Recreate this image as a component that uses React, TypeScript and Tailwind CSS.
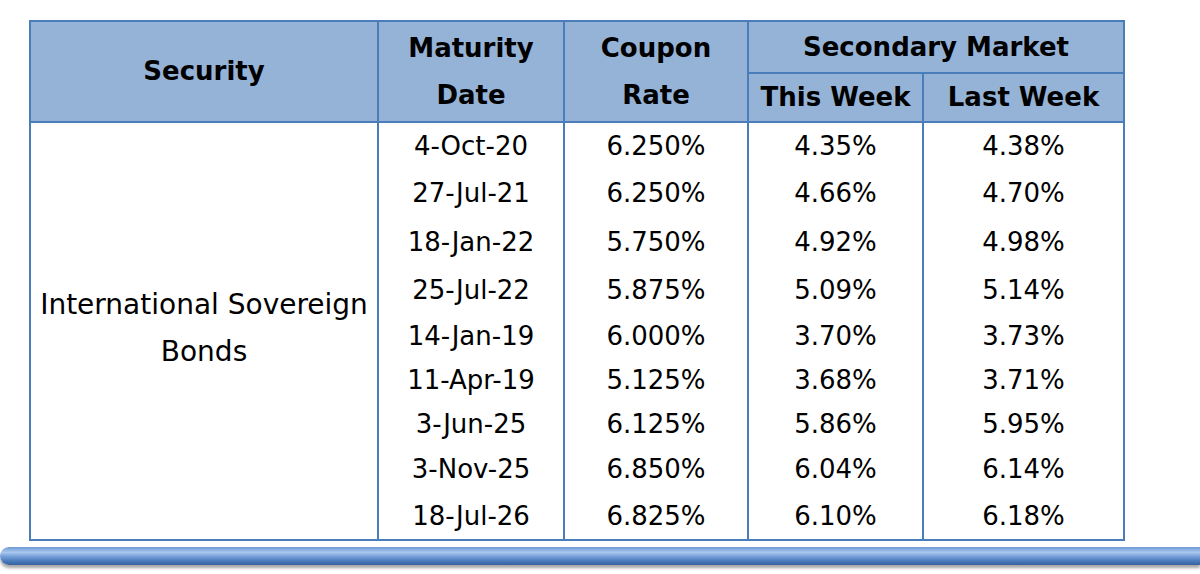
import React from "react";

const rows = [
  { date: "4-Oct-20", coupon: "6.250%", thisWeek: "4.35%", lastWeek: "4.38%", h: "h-[47px]" },
  { date: "27-Jul-21", coupon: "6.250%", thisWeek: "4.66%", lastWeek: "4.70%", h: "h-[48px]" },
  { date: "18-Jan-22", coupon: "5.750%", thisWeek: "4.92%", lastWeek: "4.98%", h: "h-[49px]" },
  { date: "25-Jul-22", coupon: "5.875%", thisWeek: "5.09%", lastWeek: "5.14%", h: "h-[47px]" },
  { date: "14-Jan-19", coupon: "6.000%", thisWeek: "3.70%", lastWeek: "3.73%", h: "h-[45px]" },
  { date: "11-Apr-19", coupon: "5.125%", thisWeek: "3.68%", lastWeek: "3.71%", h: "h-[44px]" },
  { date: "3-Jun-25", coupon: "6.125%", thisWeek: "5.86%", lastWeek: "5.95%", h: "h-[43px]" },
  { date: "3-Nov-25", coupon: "6.850%", thisWeek: "6.04%", lastWeek: "6.14%", h: "h-[47px]" },
  { date: "18-Jul-26", coupon: "6.825%", thisWeek: "6.10%", lastWeek: "6.18%", h: "h-[48px]" },
];

const th = "border-2 border-[#4a7ebb] bg-[#95b3d7] font-bold text-center align-middle p-0";
const td = "border-x-2 border-[#4a7ebb] text-center align-middle p-0";

export default function App() {
  return (
    <div className="w-[1200px] h-[574px] bg-white overflow-hidden font-['Comic_Sans_MS','DejaVu_Sans',sans-serif] text-black">
      <div className="pt-[20px] pl-[29px]">
        <table className="border-collapse table-fixed w-[1094px] text-[26px] leading-[30px]">
          <colgroup>
            <col className="w-[348px]" />
            <col className="w-[186px]" />
            <col className="w-[184px]" />
            <col className="w-[175px]" />
            <col className="w-[201px]" />
          </colgroup>
          <thead className="leading-[47px]">
            <tr className="h-[52px]">
              <th rowSpan={2} className={th}>Security</th>
              <th rowSpan={2} className={th}>Maturity<br />Date</th>
              <th rowSpan={2} className={th}>Coupon<br />Rate</th>
              <th colSpan={2} className={th}>Secondary Market</th>
            </tr>
            <tr className="h-[48px]">
              <th className={th}>This Week</th>
              <th className={th}>Last Week</th>
            </tr>
          </thead>
          <tbody>
            {rows.map((r, i) => (
              <tr key={i} className={r.h}>
                {i === 0 && (
                  <td rowSpan={rows.length} className={td + " border-b-2 text-[28px] leading-[47px] pb-[6px]"}>
                    International Sovereign<br />Bonds
                  </td>
                )}
                <td className={td + (i === rows.length - 1 ? " border-b-2" : "")}>{r.date}</td>
                <td className={td + (i === rows.length - 1 ? " border-b-2" : "")}>{r.coupon}</td>
                <td className={td + (i === rows.length - 1 ? " border-b-2" : "")}>{r.thisWeek}</td>
                <td className={td + (i === rows.length - 1 ? " border-b-2" : "")}>{r.lastWeek}</td>
              </tr>
            ))}
          </tbody>
        </table>
      </div>
      <div className="mt-[6px] h-[18px] w-full rounded-l-full bg-[linear-gradient(to_bottom,#6f98d2_0%,#a9c8ef_30%,#7ba3dc_50%,#4f7fc0_75%,#34609e_100%)] shadow-[0_3px_3px_rgba(0,0,0,0.35)]" />
    </div>
  );
}
